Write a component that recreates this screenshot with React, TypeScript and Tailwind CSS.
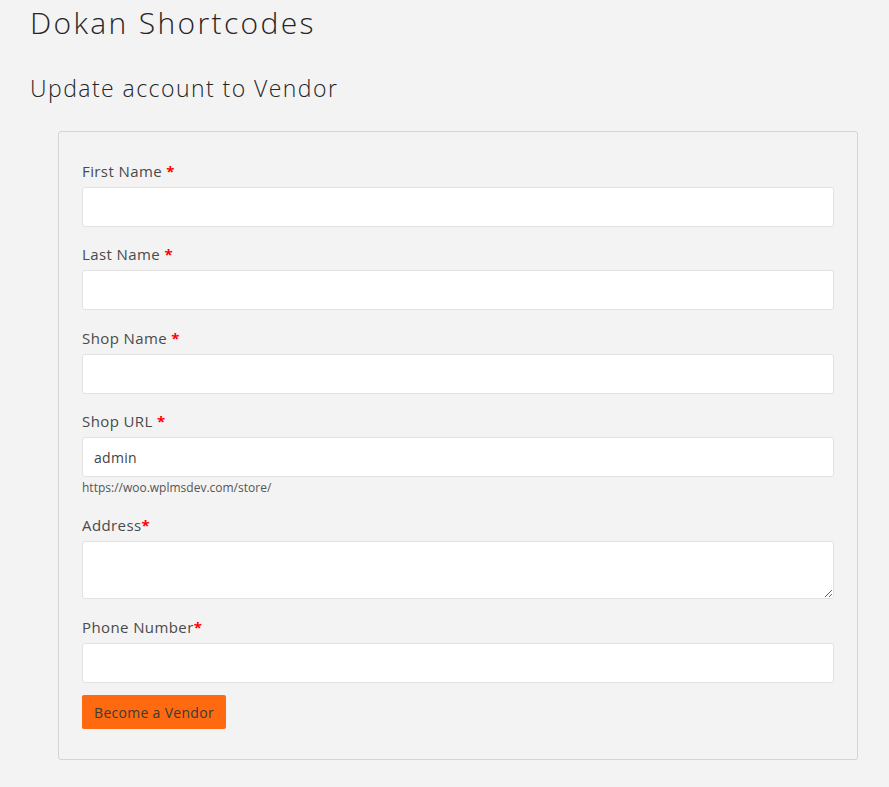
const font = { fontFamily: '"Open Sans", "Liberation Sans", sans-serif' };

function Label({ text, tight }: { text: string; tight?: boolean }) {
  return (
    <label className="block text-[15px] leading-5 tracking-[0.4px] text-[#4a4a4a] mb-[6px]">
      {text}
      {tight ? "" : " "}
      <span className="text-[#ff0000] font-bold">*</span>
    </label>
  );
}

function Field({ label, tight, value }: { label: string; tight?: boolean; value?: string }) {
  return (
    <div>
      <Label text={label} tight={tight} />
      <input
        defaultValue={value}
        className="block w-full h-10 bg-white border border-[#e2e2e2] rounded-[3px] px-[11px] text-[14px] tracking-[0.3px] text-[#444] outline-none"
      />
    </div>
  );
}

export default function App() {
  return (
    <div className="min-h-[787px] bg-[#f3f3f3] px-[30px] pt-[3px]" style={font}>
      <h1 className="text-[30px] font-light text-[#262626] leading-10 tracking-[2.35px]">Dokan Shortcodes</h1>
      <h2 className="mt-[29px] text-[23px] font-light text-[#262626] leading-8 tracking-[1.45px]">Update account to Vendor</h2>
      <div className="mt-[27px] ml-[28px] w-[800px] border border-[#d4d4d4] rounded-[3px] px-[23px] pt-[29px] pb-[30px]">
        <div className="flex flex-col gap-[17px]">
          <Field label="First Name" />
          <Field label="Last Name" />
          <div className="mt-[1px]">
            <Field label="Shop Name" />
          </div>
          <div>
            <Field label="Shop URL" value="admin" />
            <div className="mt-[3px] text-[12px] leading-4 text-[#555]">https://woo.wplmsdev.com/store/</div>
          </div>
          <div className="mt-[2px]">
            <Label text="Address" tight />
            <textarea className="block w-full h-[58px] bg-white border border-[#e2e2e2] rounded-[3px] px-[10px] outline-none" />
          </div>
          <div className="mt-[1px]">
            <Field label="Phone Number" tight />
          </div>
        </div>
        <button className="mt-[12px] h-[34px] w-[144px] bg-[#ff6a10] rounded-[2px] text-[14px] tracking-[0.3px] text-[#3a3a3a]">
          Become a Vendor
        </button>
      </div>
    </div>
  );
}
